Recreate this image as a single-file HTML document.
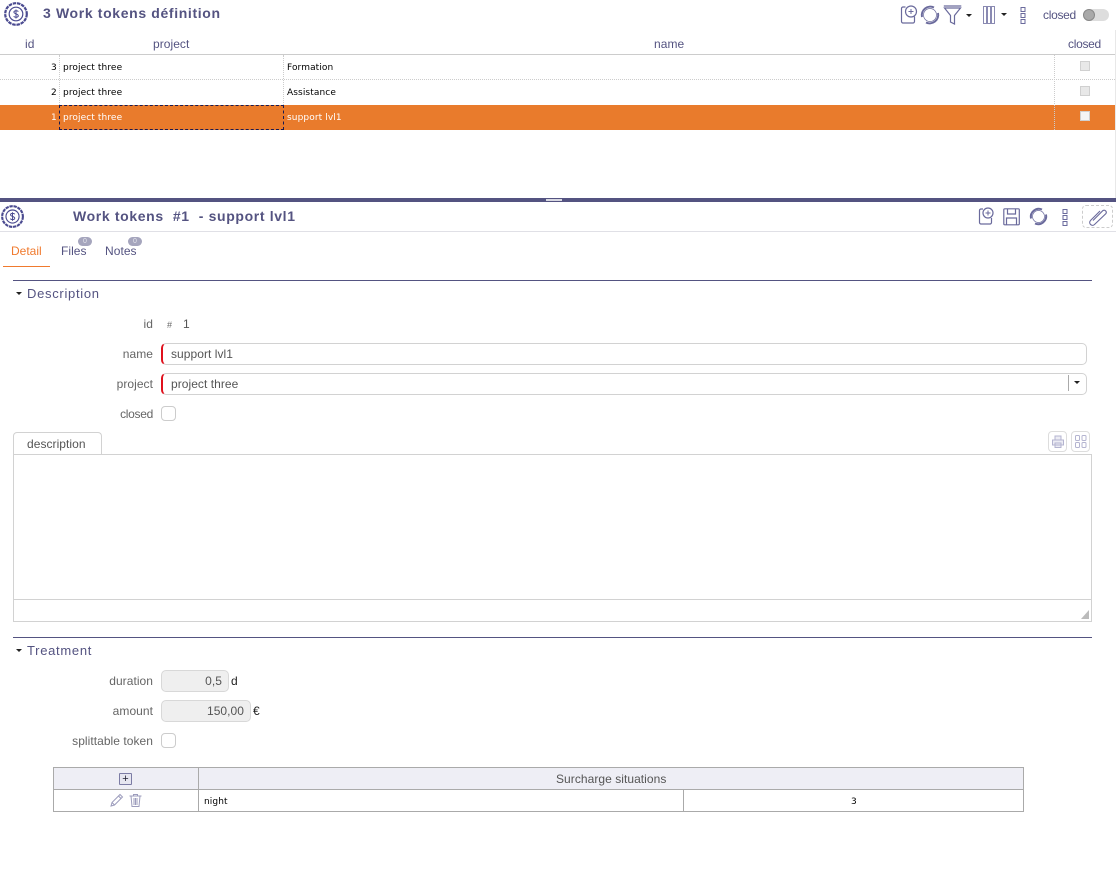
<!DOCTYPE html>
<html><head><meta charset="utf-8"><style>
html,body{margin:0;padding:0;background:#fff;width:1116px;height:893px;overflow:hidden}
body{position:relative;font-family:"DejaVu Sans","Liberation Sans",sans-serif;}
.a{position:absolute;white-space:nowrap}
.g{font-size:9px;line-height:14px;color:#000;font-family:"DejaVu Sans",sans-serif;letter-spacing:.1px}
.h{font-size:12px;line-height:14px;color:#545381;font-family:"Liberation Sans",sans-serif;letter-spacing:.05px}
.l{font-size:12px;line-height:14px;color:#656565;text-align:right;right:963px;font-family:"Liberation Sans",sans-serif;letter-spacing:.05px}
.v{font-size:12px;line-height:14px;color:#555;font-family:"Liberation Sans",sans-serif;letter-spacing:.05px}
.t{font-weight:bold;font-size:14px;line-height:16px;color:#545381;font-family:"Liberation Sans",sans-serif;letter-spacing:.64px}
.s{font-size:13px;line-height:16px;color:#545381;font-family:"Liberation Sans",sans-serif;letter-spacing:.7px}
.b{position:absolute;box-sizing:border-box}
svg{position:absolute;overflow:visible;fill:none;stroke:#6a6a9c}
.cb{position:absolute;width:10px;height:10px;box-sizing:border-box;background:#e8e8e8;border:1px solid #d0d0d0}
.ck{position:absolute;left:161px;width:15px;height:15px;box-sizing:border-box;border:1px solid #ccc;border-radius:4px;background:#fff}
.tri{position:absolute;width:0;height:0;border-left:3px solid transparent;border-right:3px solid transparent;border-top:3px solid #222}
</style></head><body>

<!-- top header -->
<svg style="left:4px;top:2px;stroke:#4a4a90" width="25" height="25" viewBox="0 0 25 25"><circle cx="12" cy="12" r="10.800" stroke-width="2.200" stroke-dasharray="3.500 .8"/><circle cx="12" cy="12" r="6.800" stroke-width="1.200"/><path d="M14.300 9.600c-.6-1.100-4.200-1.400-4.400.5-.2 2 4.600 1.500 4.400 3.800-.2 1.800-3.900 1.600-4.600.3M12 7.500v9" stroke-width="1"/></svg>
<div class="a t" style="left:43px;top:5px">3 Work tokens définition</div>

<svg style="left:900px;top:5px" width="18" height="20" stroke-width="1.200"><path d="M5.500 2H3a1.500 1.500 0 0 0-1.500 1.500v13A1.500 1.500 0 0 0 3 18h10a1.500 1.500 0 0 0 1.500-1.500v-5"/><circle cx="11" cy="6.500" r="5.500"/><path d="M11 4v5M8.500 6.500h5" stroke-width="1"/></svg>
<svg style="left:920px;top:5px" width="20" height="20" stroke-width="2"><path d="M2 12A8.500 8.500 0 0 1 14 2.500M18 8A8.500 8.500 0 0 1 6 17.500"/><circle cx="10" cy="10" r="6.500" stroke-width=".7"/></svg>
<svg style="left:943px;top:5px" width="20" height="20" stroke-width="1.200"><path d="M.8 1h17.500M1.500 3h16L11.500 10.500V19l-4-2V10.500Z"/></svg>
<div class="tri" style="left:966px;top:14px"></div>
<svg style="left:983px;top:6px;stroke:#8a8ab2" width="12" height="18" stroke-width="1"><rect x=".5" y=".5" width="3" height="17"/><rect x="4.500" y=".5" width="3" height="17"/><rect x="8.500" y=".5" width="3" height="17"/></svg>
<div class="tri" style="left:1001px;top:13px"></div>
<svg style="left:1020px;top:7px" width="6" height="17" stroke-width="1"><rect x="1" y=".5" width="4" height="4"/><rect x="1" y="6.500" width="4" height="4"/><rect x="1" y="12.500" width="4" height="4"/></svg>
<div class="a h" style="left:1043px;top:8px;letter-spacing:-.3px">closed</div>
<div class="b" style="left:1083px;top:9px;width:26px;height:12px;background:#ddd;border-radius:6px"></div>
<div class="b" style="left:1083px;top:9px;width:12px;height:12px;background:#a9a9a9;border:1px solid #888;border-radius:50%"></div>

<!-- grid header -->
<div class="a h" style="left:25px;top:37px">id</div>
<div class="a h" style="left:153px;top:37px">project</div>
<div class="a h" style="left:654px;top:37px">name</div>
<div class="a h" style="left:1068px;top:37px;letter-spacing:-.3px">closed</div>
<div class="b" style="left:0;top:54px;width:1115px;height:1px;background:#ccc"></div>
<div class="b" style="left:1115px;top:30px;width:1px;height:168px;background:#e8e8e8"></div>

<!-- grid rows -->
<div class="b" style="left:0;top:79px;width:1115px;border-top:1px dotted #ccc"></div>
<div class="b" style="left:0;top:105px;width:1115px;height:25px;background:#e97b2c"></div>
<div class="b" style="left:59px;top:55px;height:50px;border-left:1px dotted #ccc"></div>
<div class="b" style="left:283px;top:55px;height:50px;border-left:1px dotted #ccc"></div>
<div class="b" style="left:1054px;top:55px;height:75px;border-left:1px dotted #ccc"></div>
<div class="b" style="left:59px;top:105px;width:225px;height:25px;border:1px dashed #1a1a50"></div>

<div class="a g" style="left:51px;top:61px">3</div>
<div class="a g" style="left:63px;top:61px">project three</div>
<div class="a g" style="left:287px;top:61px">Formation</div>
<div class="cb" style="left:1080px;top:61px"></div>
<div class="a g" style="left:51px;top:86px">2</div>
<div class="a g" style="left:63px;top:86px">project three</div>
<div class="a g" style="left:287px;top:86px">Assistance</div>
<div class="cb" style="left:1080px;top:86px"></div>
<div class="a g" style="left:51px;top:111px;color:#fff">1</div>
<div class="a g" style="left:63px;top:111px;color:#fff">project three</div>
<div class="a g" style="left:287px;top:111px;color:#fff">support lvl1</div>
<div class="cb" style="left:1080px;top:111px;background:#f4f4f4"></div>

<!-- splitter -->
<div class="b" style="left:0;top:198px;width:1116px;height:4px;background:#545381"></div>
<div class="b" style="left:546px;top:199px;width:16px;height:2px;background:#d8d8e2"></div>

<!-- detail header -->
<svg style="left:1px;top:205px;stroke:#4a4a90" width="24" height="24" viewBox="0 0 25 25"><circle cx="12" cy="12" r="10.800" stroke-width="2.200" stroke-dasharray="3.500 .8"/><circle cx="12" cy="12" r="6.800" stroke-width="1.200"/><path d="M14.300 9.600c-.6-1.100-4.200-1.400-4.400.5-.2 2 4.600 1.500 4.400 3.800-.2 1.800-3.900 1.600-4.600.3M12 7.500v9" stroke-width="1"/></svg>
<div class="a t" style="left:73px;top:208px">Work tokens&nbsp; #1&nbsp; - support lvl1</div>

<svg style="left:978px;top:207px" width="17" height="19" stroke-width="1.200"><path d="M5 2H3a1.500 1.500 0 0 0-1.500 1.500v12A1.500 1.500 0 0 0 3 17h9a1.500 1.500 0 0 0 1.500-1.500V11"/><circle cx="10" cy="6" r="5"/><path d="M10 3.500v5M7.500 6h5" stroke-width="1"/></svg>
<svg style="left:1003px;top:208px" width="17" height="18" stroke-width="1.200"><rect x=".8" y=".8" width="15.500" height="16" rx="1"/><path d="M4.500 1v5h8V1M3.500 17v-7h10v7"/></svg>
<svg style="left:1029px;top:207px" width="19" height="19" stroke-width="2"><path d="M2 11.500A8 8 0 0 1 13 2.500M17 7.500A8 8 0 0 1 6 16.500"/><circle cx="9.500" cy="9.500" r="6" stroke-width=".7"/></svg>
<svg style="left:1062px;top:209px" width="6" height="17" stroke-width="1"><rect x="1" y=".5" width="4" height="4"/><rect x="1" y="6.500" width="4" height="4"/><rect x="1" y="12.500" width="4" height="4"/></svg>
<div class="b" style="left:1082px;top:205px;width:31px;height:23px;border:1px dashed #ccc;border-radius:4px"></div>
<svg style="left:1087px;top:207px" width="20" height="20" stroke-width="1.100"><path d="M6 13.500 16 3.500a2.200 2.200 0 0 1 3 3L7.500 17.500c-2.500 2.500-6.500-1-4-4L13 4"/></svg>

<div class="b" style="left:0;top:231px;width:1116px;height:1px;background:#e0e0e6"></div>

<!-- tabs -->
<div class="a" style="left:11px;top:244px;font:12px/14px 'Liberation Sans',sans-serif;color:#f07a2e">Detail</div>
<div class="b" style="left:3px;top:266px;width:47px;height:1px;background:#f07a2e"></div>
<div class="a h" style="left:61px;top:244px">Files</div>
<div class="a h" style="left:105px;top:244px">Notes</div>
<div class="b" style="left:78px;top:237px;width:14px;height:9px;border-radius:5px;background:#a5a5bd;color:#e4e4ec;font:7px/9px 'Liberation Sans',sans-serif;text-align:center">0</div>
<div class="b" style="left:128px;top:237px;width:14px;height:9px;border-radius:5px;background:#a5a5bd;color:#e4e4ec;font:7px/9px 'Liberation Sans',sans-serif;text-align:center">0</div>

<!-- description section -->
<div class="b" style="left:13px;top:280px;width:1079px;height:1px;background:#545381"></div>
<div class="tri" style="left:16px;top:292px"></div>
<div class="a s" style="left:27px;top:286px">Description</div>

<div class="a l" style="top:317px">id</div>
<div class="a" style="left:167px;top:318px;font:9px/14px 'Liberation Sans',sans-serif;color:#666">#</div>
<div class="a v" style="left:183px;top:317px">1</div>

<div class="a l" style="top:347px">name</div>
<div class="b" style="left:161px;top:343px;width:926px;height:22px;border:1px solid #d2d2d2;border-left:2px solid #e0101c;border-radius:5px"></div>
<div class="a v" style="left:171px;top:347px">support lvl1</div>

<div class="a l" style="top:377px">project</div>
<div class="b" style="left:161px;top:373px;width:926px;height:22px;border:1px solid #d2d2d2;border-left:2px solid #e0101c;border-radius:5px"></div>
<div class="a v" style="left:171px;top:377px">project three</div>
<div class="b" style="left:1068px;top:375px;width:1px;height:16px;background:#aaa"></div>
<div class="tri" style="left:1074px;top:381px"></div>

<div class="a l" style="top:407px;letter-spacing:-.3px">closed</div>
<div class="ck" style="top:406px"></div>

<!-- description tab + editor -->
<div class="b" style="left:13px;top:432px;width:89px;height:23px;border:1px solid #d2d2d2;border-bottom:0;border-radius:4px 4px 0 0;background:#fff"></div>
<div class="a v" style="left:27px;top:437px">description</div>
<div class="b" style="left:13px;top:454px;width:1079px;height:168px;border:1px solid #d2d2d2;background:#fff"></div>
<div class="b" style="left:14px;top:599px;width:1077px;height:1px;background:#d2d2d2"></div>
<svg style="left:1081px;top:610px" width="8" height="9"><path d="M8 0V9H0Z" style="fill:#bbb;stroke:none"/></svg>

<div class="b" style="left:1048px;top:431px;width:19px;height:21px;border:1px solid #ddd;border-radius:4px"></div>
<svg style="left:1052px;top:435px;stroke:#b4b4d0" width="12" height="14" stroke-width="1"><path d="M3 5V1h6v4M.5 5h11v5H.5ZM3 8h6v4.500H3Z" style="fill:#ececf4"/></svg>
<div class="b" style="left:1071px;top:431px;width:19px;height:21px;border:1px solid #ddd;border-radius:4px"></div>
<svg style="left:1075px;top:435px;stroke:#b4b4d0" width="12" height="14" stroke-width="1"><rect x=".5" y=".5" width="4" height="5" rx="1"/><rect x="7" y=".5" width="4" height="5" rx="1"/><rect x=".5" y="7.500" width="4" height="5" rx="1"/><rect x="7" y="7.500" width="4" height="5" rx="1"/></svg>

<!-- treatment -->
<div class="b" style="left:13px;top:637px;width:1079px;height:1px;background:#545381"></div>
<div class="tri" style="left:16px;top:649px"></div>
<div class="a s" style="left:27px;top:643px">Treatment</div>

<div class="a l" style="top:674px">duration</div>
<div class="b" style="left:161px;top:670px;width:68px;height:22px;border:1px solid #d8d8d8;border-radius:5px;background:#efefef"></div>
<div class="a v" style="right:894px;top:674px;text-align:right">0,5</div>
<div class="a v" style="left:231px;top:674px;color:#222">d</div>

<div class="a l" style="top:704px">amount</div>
<div class="b" style="left:161px;top:700px;width:90px;height:22px;border:1px solid #d8d8d8;border-radius:5px;background:#efefef"></div>
<div class="a v" style="right:872px;top:704px;text-align:right">150,00</div>
<div class="a v" style="left:253px;top:704px;color:#222">€</div>

<div class="a l" style="top:734px">splittable token</div>
<div class="ck" style="top:733px"></div>

<!-- table -->
<div class="b" style="left:53px;top:767px;width:971px;height:45px;border:1px solid #aaa;background:#fff"></div>
<div class="b" style="left:54px;top:768px;width:969px;height:21px;background:#eeeef5"></div>
<div class="b" style="left:54px;top:789px;width:969px;height:1px;background:#aaa"></div>
<div class="b" style="left:198px;top:768px;width:1px;height:43px;background:#aaa"></div>
<div class="b" style="left:683px;top:790px;width:1px;height:21px;background:#aaa"></div>
<div class="b" style="left:119px;top:773px;width:13px;height:12px;border:1px solid #7c7ca5;border-radius:1px;background:#e6e6f0;color:#223;font:11px/10px 'Liberation Sans',sans-serif;text-align:center">+</div>
<div class="a h" style="left:556px;top:772px;color:#555">Surcharge situations</div>
<svg style="left:110px;top:793px;stroke:#9c9cbc" width="14" height="14" stroke-width="1"><path d="M1 13 2 9.500 10 1.500l2.500 2.500L4.500 12ZM2 9.500 4.500 12M8.500 3l2.500 2.500"/></svg>
<svg style="left:129px;top:794px;stroke:#9c9cbc" width="14" height="13" stroke-width="1"><path d="M.5 2h12M4.500 2V.5h4V2M2 2l1 10.500h7L11 2M5 4v7M6.500 4v7M8 4v7"/></svg>
<div class="a g" style="left:204px;top:795px">night</div>
<div class="a g" style="left:851px;top:795px">3</div>

</body></html>
